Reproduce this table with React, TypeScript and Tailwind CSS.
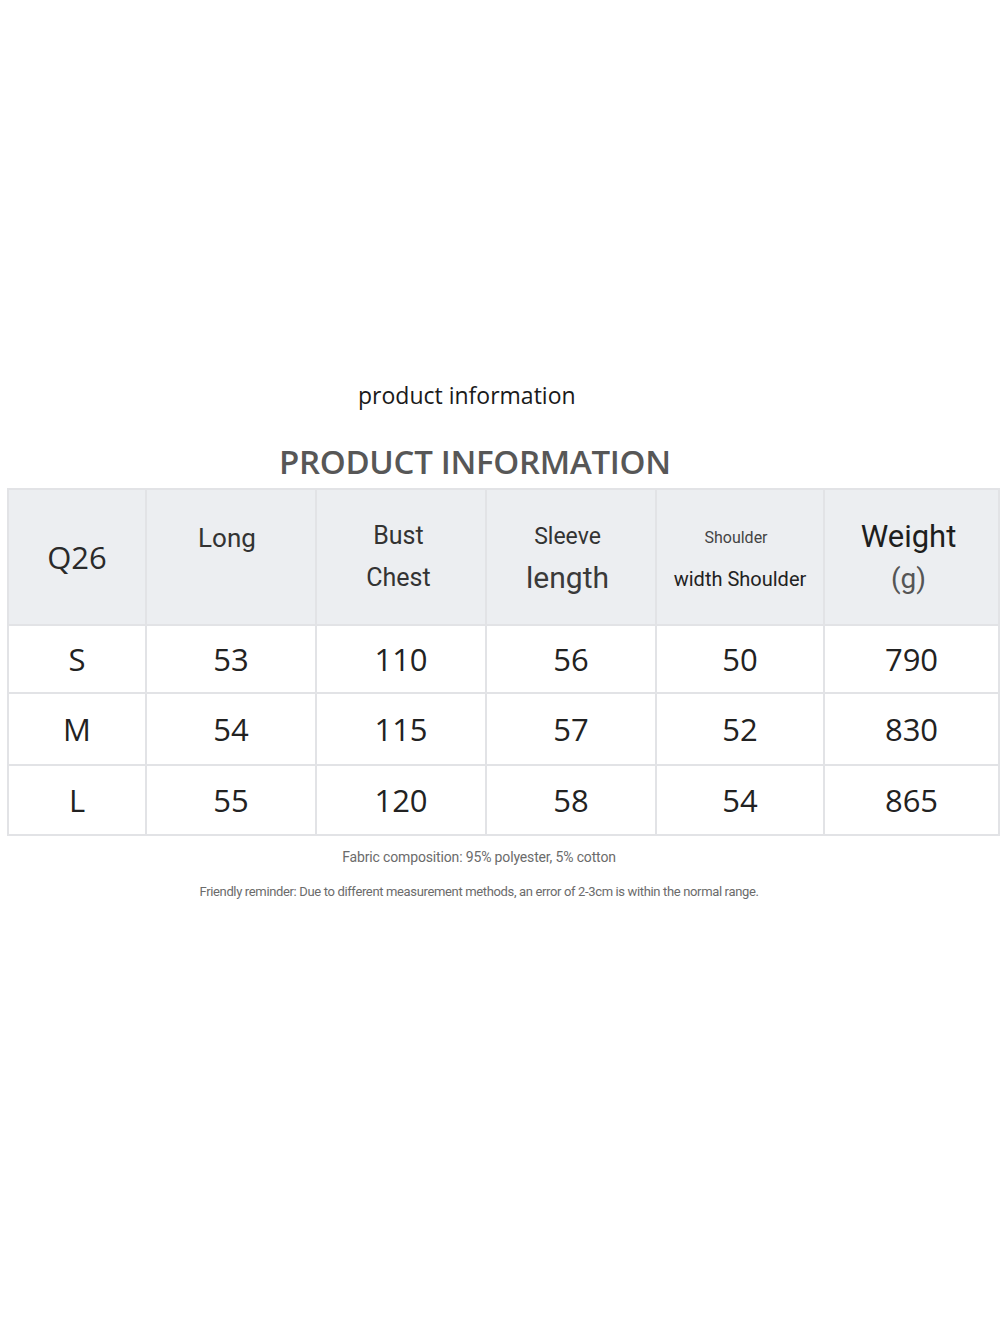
const rows = [
  ["S", "53", "110", "56", "50", "790"],
  ["M", "54", "115", "57", "52", "830"],
  ["L", "55", "120", "58", "54", "865"],
];

const widths = ["w-[138px]", "w-[170px]", "w-[170px]", "w-[170px]", "w-[168px]", "w-[175px]"];
const rowHeights = ["h-[68px]", "h-[72px]", "h-[70px]"];

export default function App() {
  return (
    <div className="h-[1327px] w-[1000px] bg-white" style={{ fontFamily: '"Open Sans", "Noto Sans", sans-serif' }}>
      <div className="pt-[378px] pl-[358px] text-[23px] leading-[34px] text-[#1a1a1a]">product information</div>
      <div className="mt-[30px] pl-[279px] text-[33px] font-semibold leading-[40px] tracking-[-0.3px] text-[#575757]">
        PRODUCT INFORMATION
      </div>
      <div className="ml-[7px] mt-[6px] w-[991px]">
        <table className="w-full table-fixed border-collapse">
          <thead>
            <tr className="h-[136px] bg-[#eceef1] text-[#2a2a2a]">
              <th className={`${widths[0]} border-2 border-[#e2e3e6] p-0 align-middle text-[31px] font-normal`}>Q26</th>
              <th className={`${widths[1]} border-2 border-[#e2e3e6] p-0 pr-[8px] align-top font-normal`}>
                <div className="pt-[30px] text-[26px] leading-[36px] text-[#333]" style={{ fontFamily: "Roboto, sans-serif" }}>Long</div>
              </th>
              <th className={`${widths[2]} border-2 border-[#e2e3e6] p-0 pr-[5px] align-top font-normal text-[#333]`} style={{ fontFamily: "Roboto, sans-serif" }}>
                <div className="pt-[29px] text-[25px] leading-[34px]">Bust</div>
                <div className="pt-[8px] text-[25px] leading-[34px]">Chest</div>
              </th>
              <th className={`${widths[3]} border-2 border-[#e2e3e6] p-0 pr-[7px] align-top font-normal text-[#333]`} style={{ fontFamily: "Roboto, sans-serif" }}>
                <div className="pt-[31px] text-[23px] leading-[32px]">Sleeve</div>
                <div className="pt-[6px] text-[30px] leading-[38px] text-[#3a3a3a]">length</div>
              </th>
              <th className={`${widths[4]} border-2 border-[#e2e3e6] p-0 align-top font-normal text-[#333]`} style={{ fontFamily: "Roboto, sans-serif" }}>
                <div className="pt-[36px] pr-[8px] text-[16px] leading-[24px] text-[#444]">Shoulder</div>
                <div className="pt-[15px] text-[20px] leading-[28px] text-[#222]">width Shoulder</div>
              </th>
              <th className={`${widths[5]} border-2 border-[#e2e3e6] p-0 pr-[6px] align-top font-normal`} style={{ fontFamily: "Roboto, sans-serif" }}>
                <div className="pt-[27px] text-[31px] leading-[40px] text-[#1e1e1e]">Weight</div>
                <div className="pt-[3px] text-[28px] leading-[38px] text-[#555]">(g)</div>
              </th>
            </tr>
          </thead>
          <tbody>
            {rows.map((r, i) => (
              <tr key={r[0]} className={rowHeights[i]}>
                {r.map((c, j) => (
                  <td
                    key={j}
                    className="border-2 border-[#e2e3e6] p-0 text-center align-middle text-[31px] text-[#222]"
                  >
                    {c}
                  </td>
                ))}
              </tr>
            ))}
          </tbody>
        </table>
      </div>
      <div className="mt-[12px] flex flex-col items-center pr-[42px] text-[#6b6b6b]" style={{ fontFamily: "Roboto, sans-serif" }}>
        <div className="text-[14px] leading-[18px] tracking-[-0.15px]">Fabric composition: 95% polyester, 5% cotton</div>
        <div className="mt-[17px] text-[13px] leading-[18px] tracking-[-0.35px]">
          Friendly reminder: Due to different measurement methods, an error of 2-3cm is within the normal range.
        </div>
      </div>
    </div>
  );
}
